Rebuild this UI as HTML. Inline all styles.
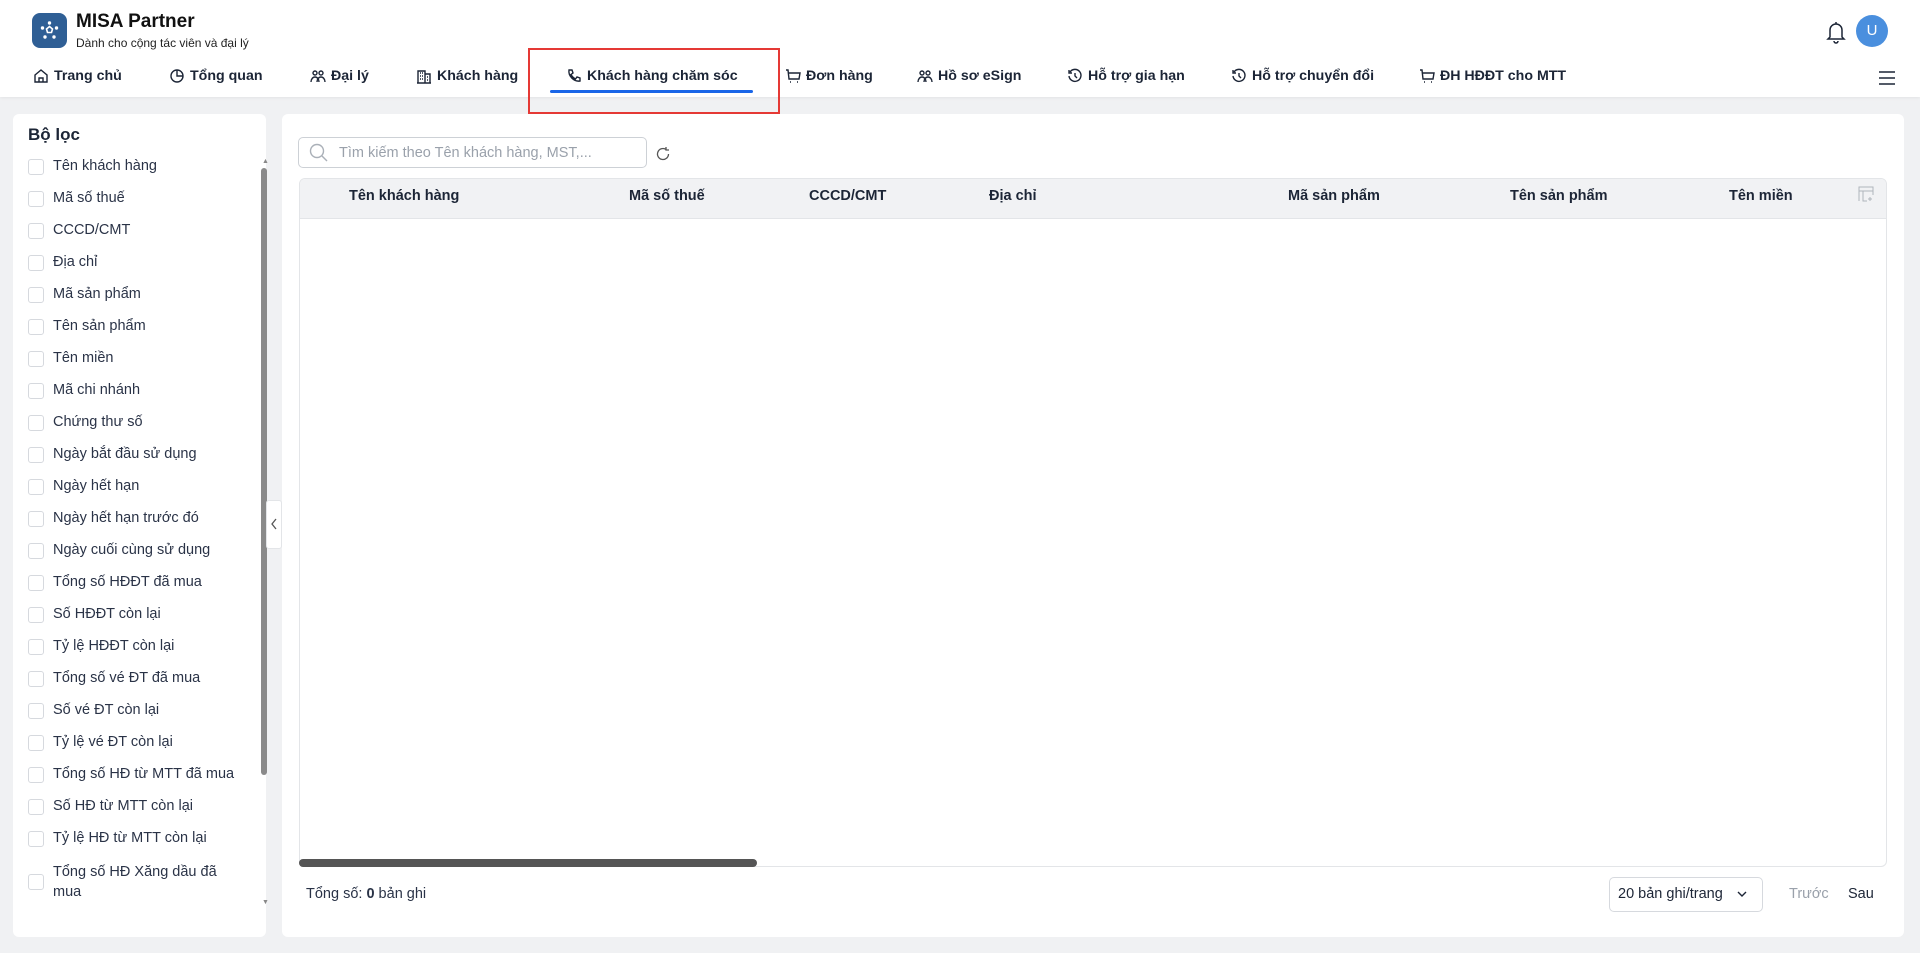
<!DOCTYPE html>
<html><head><meta charset="utf-8"><style>
*{box-sizing:border-box;margin:0;padding:0}
body{width:1920px;height:953px;background:#f0f1f3;font-family:"Liberation Sans",sans-serif;color:#1c2536;position:relative;overflow:hidden}
.abs{position:absolute}
.hdr{left:0;top:0;width:1920px;height:97px;background:#fff;box-shadow:0 1px 3px rgba(0,0,0,.06)}
.nav{top:68px;font-size:14.2px;font-weight:bold;color:#1c2536;white-space:nowrap;display:flex;align-items:center;gap:5px}
.nav svg{width:16px;height:16px;fill:none;stroke:#1c2536;stroke-width:1.4}
.cb{left:28px;width:16px;height:16px;border:1px solid #d6d9de;border-radius:3px;background:#fff}
.lbl{left:53px;font-size:14.5px;color:#2a3347;white-space:nowrap}
.th{top:188px;font-size:14.5px;font-weight:bold;color:#1c2536;white-space:nowrap}
</style></head><body>
<div class="abs hdr"></div>
<div class="abs" style="left:32px;top:13px;width:35px;height:35px;border-radius:8px;background:#2f5f95"></div>
<svg class="abs" style="left:38px;top:19px" width="23" height="23" viewBox="0 0 23 23"><g fill="#fff"><circle cx="11.5" cy="4" r="1.7"/><circle cx="4.5" cy="9" r="1.7"/><circle cx="18.5" cy="9" r="1.7"/><circle cx="7" cy="18" r="1.7"/><circle cx="16" cy="18" r="1.7"/></g><path d="M11.5 7.5l3 2.5-1 3.5h-4l-1-3.5z" fill="none" stroke="#fff" stroke-width="1.6"/></svg>
<div class="abs" style="left:76px;top:11px;font-size:19px;font-weight:bold;color:#111">MISA Partner</div>
<div class="abs" style="left:76px;top:36px;font-size:12px;color:#222">Dành cho cộng tác viên và đại lý</div>
<svg class="abs" style="left:1826px;top:20px" width="20" height="24" viewBox="0 0 20 24" fill="none" stroke="#1c2536" stroke-width="1.5"><path d="M10 2v1.5M4 17V10a6 6 0 0 1 12 0v7l2 2H2z"/><path d="M8 21a2 2 0 0 0 4 0"/></svg>
<div class="abs" style="left:1856px;top:15px;width:32px;height:32px;border-radius:50%;background:#4a8fde;color:#fff;font-size:15px;text-align:center;line-height:32px">U</div>
<div class="nav abs" style="left:33px"><svg viewBox="0 0 16 16"><path d="M2 7l6-5 6 5v7H2z M6 14v-4h4v4"/></svg>Trang chủ</div>
<div class="nav abs" style="left:169px"><svg viewBox="0 0 16 16"><circle cx="8" cy="8" r="6"/><path d="M8 2v6h6"/></svg>Tổng quan</div>
<div class="nav abs" style="left:310px"><svg viewBox="0 0 16 16"><circle cx="5" cy="5" r="2"/><circle cx="11" cy="5" r="2"/><path d="M1 14c0-3 2-5 4-5s4 2 4 5M7 14c0-3 2-5 4-5s4 2 4 5"/></svg>Đại lý</div>
<div class="nav abs" style="left:416px"><svg viewBox="0 0 16 16"><path d="M2 15V3h7v12M9 6h5v9M1 15h14M4 5h1M6 5h1M4 8h1M6 8h1M4 11h1M6 11h1M11 9h1M11 12h1"/></svg>Khách hàng</div>
<div class="nav abs" style="left:566px"><svg viewBox="0 0 16 16"><path d="M3 2l3 0 1 3-2 1.5c1 2 2.5 3.5 4.5 4.5L11 9l3 1v3c-6 1-12-5-11-11z"/></svg>Khách hàng chăm sóc</div>
<div class="abs" style="left:550px;top:90px;width:203px;height:3px;background:#1a66e8;border-radius:2px"></div>
<div class="abs" style="left:528px;top:48px;width:252px;height:66px;border:2px solid #e53935"></div>
<div class="nav abs" style="left:785px"><svg viewBox="0 0 16 16"><path d="M1 2h2l1 9h10l1-6H4M5 14h1M12 14h1"/></svg>Đơn hàng</div>
<div class="nav abs" style="left:917px"><svg viewBox="0 0 16 16"><circle cx="5" cy="5" r="2"/><circle cx="11" cy="5" r="2"/><path d="M1 14c0-3 2-5 4-5s4 2 4 5M7 14c0-3 2-5 4-5s4 2 4 5"/></svg>Hồ sơ eSign</div>
<div class="nav abs" style="left:1067px"><svg viewBox="0 0 16 16"><path d="M3 4a6 6 0 1 1-1 4M2 2v3h3M8 5v3l2 2"/></svg>Hỗ trợ gia hạn</div>
<div class="nav abs" style="left:1231px"><svg viewBox="0 0 16 16"><path d="M3 4a6 6 0 1 1-1 4M2 2v3h3M8 5v3l2 2"/></svg>Hỗ trợ chuyển đổi</div>
<div class="nav abs" style="left:1419px"><svg viewBox="0 0 16 16"><path d="M1 2h2l1 9h10l1-6H4M5 14h1M12 14h1"/></svg>ĐH HĐĐT cho MTT</div>
<svg class="abs" style="left:1879px;top:71px" width="16" height="14" stroke="#1c2536" stroke-width="1.5"><path d="M0 1h16M0 7h16M0 13h16"/></svg>

<div class="abs" style="left:13px;top:114px;width:253px;height:823px;background:#fff;border-radius:6px"></div>
<div class="abs" style="left:28px;top:125px;font-size:17px;font-weight:bold">Bộ lọc</div>
<div class="abs" style="left:261px;top:168px;width:6px;height:607px;background:#8a8a8a;border-radius:3px"></div>
<div class="abs" style="left:262px;top:158px;font-size:7px;color:#888">▲</div>
<div class="abs" style="left:262px;top:899px;font-size:7px;color:#888">▼</div>
<div class="abs" style="left:266px;top:500px;width:16px;height:49px;background:#fff;border:1px solid #e3e5e8;border-radius:3px"></div>
<svg class="abs" style="left:270px;top:518px" width="8" height="12" fill="none" stroke="#555" stroke-width="1.3"><path d="M6 1L2 6l4 5"/></svg>
<div class="cb abs" style="top:159px"></div><div class="lbl abs" style="top:158px">Tên khách hàng</div>
<div class="cb abs" style="top:191px"></div><div class="lbl abs" style="top:190px">Mã số thuế</div>
<div class="cb abs" style="top:223px"></div><div class="lbl abs" style="top:222px">CCCD/CMT</div>
<div class="cb abs" style="top:255px"></div><div class="lbl abs" style="top:254px">Địa chỉ</div>
<div class="cb abs" style="top:287px"></div><div class="lbl abs" style="top:286px">Mã sản phẩm</div>
<div class="cb abs" style="top:319px"></div><div class="lbl abs" style="top:318px">Tên sản phẩm</div>
<div class="cb abs" style="top:351px"></div><div class="lbl abs" style="top:350px">Tên miền</div>
<div class="cb abs" style="top:383px"></div><div class="lbl abs" style="top:382px">Mã chi nhánh</div>
<div class="cb abs" style="top:415px"></div><div class="lbl abs" style="top:414px">Chứng thư số</div>
<div class="cb abs" style="top:447px"></div><div class="lbl abs" style="top:446px">Ngày bắt đầu sử dụng</div>
<div class="cb abs" style="top:479px"></div><div class="lbl abs" style="top:478px">Ngày hết hạn</div>
<div class="cb abs" style="top:511px"></div><div class="lbl abs" style="top:510px">Ngày hết hạn trước đó</div>
<div class="cb abs" style="top:543px"></div><div class="lbl abs" style="top:542px">Ngày cuối cùng sử dụng</div>
<div class="cb abs" style="top:575px"></div><div class="lbl abs" style="top:574px">Tổng số HĐĐT đã mua</div>
<div class="cb abs" style="top:607px"></div><div class="lbl abs" style="top:606px">Số HĐĐT còn lại</div>
<div class="cb abs" style="top:639px"></div><div class="lbl abs" style="top:638px">Tỷ lệ HĐĐT còn lại</div>
<div class="cb abs" style="top:671px"></div><div class="lbl abs" style="top:670px">Tổng số vé ĐT đã mua</div>
<div class="cb abs" style="top:703px"></div><div class="lbl abs" style="top:702px">Số vé ĐT còn lại</div>
<div class="cb abs" style="top:735px"></div><div class="lbl abs" style="top:734px">Tỷ lệ vé ĐT còn lại</div>
<div class="cb abs" style="top:767px"></div><div class="lbl abs" style="top:766px">Tổng số HĐ từ MTT đã mua</div>
<div class="cb abs" style="top:799px"></div><div class="lbl abs" style="top:798px">Số HĐ từ MTT còn lại</div>
<div class="cb abs" style="top:831px"></div><div class="lbl abs" style="top:830px">Tỷ lệ HĐ từ MTT còn lại</div>
<div class="cb abs" style="top:874px"></div><div class="lbl abs" style="top:862px;line-height:20px">Tổng số HĐ Xăng dầu đã<br>mua</div>

<div class="abs" style="left:282px;top:114px;width:1622px;height:823px;background:#fff;border-radius:6px"></div>
<div class="abs" style="left:298px;top:137px;width:349px;height:31px;border:1px solid #cdd1d6;border-radius:5px"></div>
<svg class="abs" style="left:309px;top:143px" width="19" height="19" fill="none" stroke="#aab0b8" stroke-width="1.4"><circle cx="8" cy="8" r="6.5"/><path d="M13 13l5 5"/></svg>
<div class="abs" style="left:339px;top:145px;font-size:14.5px;color:#9aa1ab">Tìm kiếm theo Tên khách hàng, MST,...</div>
<svg class="abs" style="left:655px;top:146px" width="16" height="16" fill="none" stroke="#555" stroke-width="1.3"><path d="M13.5 8A5.5 5.5 0 1 1 11 3.4M11 1v3h3"/></svg>
<div class="abs" style="left:299px;top:178px;width:1588px;height:689px;border:1px solid #e3e5e8;border-radius:6px;overflow:hidden"><div style="height:40px;background:#f1f2f4;border-bottom:1px solid #e3e5e8"></div></div>
<div class="th abs" style="left:349px">Tên khách hàng</div>
<div class="th abs" style="left:629px">Mã số thuế</div>
<div class="th abs" style="left:809px">CCCD/CMT</div>
<div class="th abs" style="left:989px">Địa chỉ</div>
<div class="th abs" style="left:1288px">Mã sản phẩm</div>
<div class="th abs" style="left:1510px">Tên sản phẩm</div>
<div class="th abs" style="left:1729px">Tên miền</div>
<svg class="abs" style="left:1858px;top:186px" width="16" height="16" fill="none" stroke="#b0b5bc" stroke-width="1"><path d="M1 15V1h14v8M1 5h14M5 5v10h4M12 11v4M10 13h4"/></svg>
<div class="abs" style="left:299px;top:859px;width:458px;height:8px;background:#555;border-radius:4px"></div>
<div class="abs" style="left:306px;top:886px;font-size:14.5px;color:#2a3347">Tổng số: <b>0</b> bản ghi</div>
<div class="abs" style="left:1609px;top:877px;width:154px;height:35px;border:1px solid #d6d9de;border-radius:5px"></div>
<div class="abs" style="left:1618px;top:886px;font-size:14.5px;color:#1c2536">20 bản ghi/trang</div>
<svg class="abs" style="left:1737px;top:891px" width="10" height="7" fill="none" stroke="#1c2536" stroke-width="1.4"><path d="M1 1l4 4 4-4"/></svg>
<div class="abs" style="left:1789px;top:886px;font-size:14.5px;color:#9aa1ab">Trước</div>
<div class="abs" style="left:1848px;top:886px;font-size:14.5px;color:#1c2536">Sau</div>
</body></html>
